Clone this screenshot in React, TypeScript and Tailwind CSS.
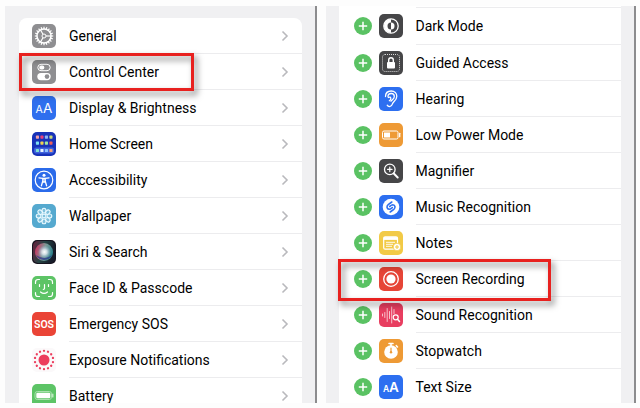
import type { ReactNode } from 'react'

type Item = {
  label: string
  icon: ReactNode
  highlighted?: boolean
}

const Tile = ({ color, children }: { color: string; children?: ReactNode }) => (
  <svg viewBox="0 0 24 24" className="size-6 shrink-0" aria-hidden="true">
    <rect width="24" height="24" rx="5" fill={color} />
    {children}
  </svg>
)

const spokes = (count: number) => Array.from({ length: count }, (_, i) => (i * 360) / count)

const GearIcon = () => (
  <Tile color="#8e8e91">
    <g fill="none" stroke="#fff">
      <circle cx="12" cy="12" r="7" strokeWidth="1.5" />
      <circle cx="12" cy="12" r="2" strokeWidth="1" />
      {spokes(20).map((a) => (
        <path key={a} d="M12 5V2.8" strokeWidth="1.2" transform={`rotate(${a} 12 12)`} />
      ))}
      {[90, 210, 330].map((a) => (
        <path key={a} d="M12 10V5" strokeWidth="1.2" transform={`rotate(${a} 12 12)`} />
      ))}
    </g>
  </Tile>
)

const TogglesIcon = () => (
  <Tile color="#8e8e91">
    <rect x="5.8" y="4.3" width="12.4" height="6.4" rx="3.2" fill="none" stroke="#fff" />
    <rect x="7.3" y="5.5" width="5" height="4" rx="1.8" fill="#fff" />
    <rect x="5.3" y="13" width="13.4" height="7.2" rx="3.6" fill="#fff" />
    <circle cx="15" cy="16.6" r="2.3" fill="#8e8e91" />
  </Tile>
)

const BrightnessIcon = () => (
  <Tile color="#2f6fee">
    <g fill="#fff" fontFamily="Inter, sans-serif">
      <text x="3.6" y="17" fontSize="10.5">A</text>
      <text x="11" y="17" fontSize="13.5">A</text>
    </g>
  </Tile>
)

const TextSizeIcon = () => (
  <Tile color="#2d6ff0">
    <g fill="#fff" fontFamily="Inter, sans-serif" fontWeight="600">
      <text x="4" y="17" fontSize="8.5">A</text>
      <text x="10" y="17" fontSize="13.5">A</text>
    </g>
  </Tile>
)

const appColors = [
  ['#f3a0a8', '#e8407c', '#8fb4f4', '#c7d777'],
  ['#7fe0f0', '#f2d24e', '#9fe7a0', '#f0605a'],
  ['#7fe0d0', '#e8f4ff', '#8fc2ff', '#f5a27a'],
]

const HomeScreenIcon = () => (
  <Tile color="#1832b8">
    <rect x="2" y="15.6" width="20" height="5.8" rx="2" fill="#3f62dc" />
    {appColors.map((row, y) =>
      row.map((c, x) => (
        <rect key={`${x}-${y}`} x={3.9 + x * 4.5} y={[3.6, 9.6, 16.9][y]} width="3.1" height="3.1" rx="0.6" fill={c} />
      )),
    )}
  </Tile>
)

const AccessibilityIcon = () => (
  <Tile color="#2b6bea">
    <circle cx="12" cy="12" r="8.8" fill="none" stroke="#fff" strokeWidth="1.2" />
    <circle cx="12" cy="7.3" r="1.5" fill="#fff" />
    <path
      d="M7 9.8 10.8 10.4V13L9.4 17.8M17 9.8 13.2 10.4V13L14.6 17.8M11 10.5H13V14H11Z"
      fill="none"
      stroke="#fff"
      strokeWidth="1.3"
      strokeLinecap="round"
      strokeLinejoin="round"
    />
  </Tile>
)

const WallpaperIcon = () => (
  <Tile color="#55a9cf">
    <g fill="#a9d8ea" fillOpacity="0.5" stroke="#eafaff" strokeWidth="1.1">
      {spokes(8).map((a) => (
        <ellipse key={a} cx="12" cy="6.6" rx="2" ry="2.4" transform={`rotate(${a} 12 12)`} />
      ))}
      <circle cx="12" cy="12" r="1.9" />
    </g>
  </Tile>
)

const SiriIcon = () => (
  <svg viewBox="0 0 24 24" className="size-6 shrink-0" aria-hidden="true">
    <defs>
      <linearGradient id="siri-base" x1="0" y1="0" x2="1" y2="0.3">
        <stop offset="0" stopColor="#8c2448" />
        <stop offset="0.5" stopColor="#2d5a55" />
        <stop offset="1" stopColor="#16202f" />
      </linearGradient>
      <linearGradient id="siri-orb" x1="0" y1="0.3" x2="1" y2="0.6">
        <stop offset="0" stopColor="#c9305f" />
        <stop offset="0.5" stopColor="#7f9a96" />
        <stop offset="1" stopColor="#27808a" />
      </linearGradient>
      <radialGradient id="siri-glow">
        <stop offset="0" stopColor="#fff" />
        <stop offset="0.4" stopColor="#e6eef5" stopOpacity="0.8" />
        <stop offset="1" stopColor="#9cc4e8" stopOpacity="0" />
      </radialGradient>
    </defs>
    <rect width="24" height="24" rx="5" fill="#17141f" />
    <rect x="1" y="1" width="22" height="22" rx="5" fill="url(#siri-base)" opacity="0.7" />
    <circle cx="12" cy="12" r="9" fill="url(#siri-orb)" />
    <path d="M4 15a9 9 0 0 0 16 0q-7 6-16 0" fill="#2b2f8c" opacity="0.7" />
    <circle cx="12.5" cy="12" r="6.5" fill="url(#siri-glow)" />
  </svg>
)

const FaceIcon = () => (
  <Tile color="#5dc466">
    <g fill="none" stroke="#fff" strokeWidth="1.2" strokeLinecap="round">
      <path d="M3.5 7.5V6A2.5 2.5 0 0 1 6 3.5H7.5M16.5 3.5H18A2.5 2.5 0 0 1 20.5 6V7.5M20.5 16.5V18A2.5 2.5 0 0 1 18 20.5H16.5M7.5 20.5H6A2.5 2.5 0 0 1 3.5 18V16.5" />
      <path d="M7.5 8.5V10.5M16.5 8.5V10.5M12.5 8.5V12.5Q12.5 13.3 11.3 13.3M8.5 16Q12 18.8 15.5 16" />
    </g>
  </Tile>
)

const SosIcon = () => (
  <Tile color="#ea4436">
    <text x="12" y="15.8" fontSize="10.5" fontWeight="600" fill="#fff" textAnchor="middle" fontFamily="Roboto, sans-serif">
      SOS
    </text>
  </Tile>
)

const ExposureIcon = () => (
  <Tile color="#fbf9fa">
    <circle cx="12" cy="12" r="5.5" fill="#ec3d5d" />
    {spokes(14).map((a) => (
      <circle key={a} cx="12" cy="2.8" r="1.15" fill="#ec3d5d" transform={`rotate(${a} 12 12)`} />
    ))}
  </Tile>
)

const BatteryIcon = () => (
  <Tile color="#5dc466">
    <rect x="3" y="7.5" width="16.5" height="8" rx="2.3" fill="none" stroke="#a9e0ad" />
    <rect x="4.3" y="8.7" width="14" height="5.6" rx="1.3" fill="#fff" />
    <path d="M20.8 10V13" stroke="#d6f3d8" strokeWidth="1.2" strokeLinecap="round" />
  </Tile>
)

const DarkModeIcon = () => (
  <Tile color="#464648">
    <circle cx="12" cy="12" r="7.2" fill="none" stroke="#fff" strokeWidth="1.3" />
    <path d="M12 5A7 7 0 0 0 12 19V15.5A3.5 3.5 0 0 1 12 8.5Z" fill="#fff" />
    <path d="M12 8.5A3.5 3.5 0 0 1 12 15.5Z" fill="#fff" />
  </Tile>
)

const GuidedAccessIcon = () => (
  <Tile color="#464648">
    <rect x="3.5" y="3.5" width="17" height="17" rx="2.5" fill="none" stroke="#d8d8d8" strokeDasharray="1 1" />
    <rect x="8" y="11" width="8" height="6.5" rx="1" fill="#fff" />
    <path d="M9.7 11V9A2.3 2.3 0 0 1 14.3 9V11" fill="none" stroke="#fff" strokeWidth="1.4" />
  </Tile>
)

const EarIcon = () => (
  <Tile color="#2d6ff0">
    <g fill="none" stroke="#fff" strokeWidth="1.3" strokeLinecap="round" strokeLinejoin="round">
      <path d="M6.5 9.5C6.5 6 9 4 12.2 4C15.5 4 17.8 6.3 17.8 9.3C17.8 13.8 14 14.2 13.3 17.2C12.7 19.7 9.5 20.4 8.2 18.2" />
      <path d="M9 9.5C9 7.7 10.3 6.5 12.2 6.5C14 6.5 15.3 7.7 15.3 9.4C15.3 11.8 13.3 12.5 12 14.2" />
      <path d="M9.3 10.5Q11.8 9.3 11.8 11.5Q11.8 13 10.3 13.8" />
    </g>
  </Tile>
)

const LowPowerIcon = () => (
  <Tile color="#ee9a35">
    <rect x="3.5" y="8" width="15.5" height="8" rx="1.5" fill="none" stroke="#fff" />
    <rect x="5" y="9.5" width="6" height="5" fill="#fff" />
    <path d="M20.7 10.3V13.7" stroke="#fff" strokeWidth="1.3" strokeLinecap="round" />
  </Tile>
)

const MagnifierIcon = () => (
  <Tile color="#464648">
    <g fill="none" stroke="#fff" strokeLinecap="round">
      <circle cx="10.8" cy="10.4" r="5.3" strokeWidth="1.3" />
      <path d="M14.8 14.5 18.7 18.5" strokeWidth="2" />
      <path d="M8.6 10.4H13M10.8 8.2V12.6" strokeWidth="1.2" />
    </g>
  </Tile>
)

const MusicIcon = () => (
  <Tile color="#2d6ff0">
    <circle cx="12" cy="12" r="8.3" fill="#fff" />
    <g fill="none" stroke="#2d6ff0" strokeWidth="1.6" strokeLinecap="round">
      <path d="M12.8 7 9.2 9.6C7.2 11.2 7.8 14.2 10.2 14.3C11.4 14.3 12.2 13.5 13.3 12.6" />
      <path d="M11.2 17 14.8 14.4C16.8 12.8 16.2 9.8 13.8 9.7C12.6 9.7 11.8 10.5 10.7 11.4" />
    </g>
  </Tile>
)

const NotesIcon = () => (
  <Tile color="#f2ca46">
    <rect x="4.7" y="5.8" width="13.8" height="12.4" rx="1.5" fill="none" stroke="#fff" strokeWidth="1.2" />
    <path d="M4.7 7.5H18.5" stroke="#fff" strokeWidth="2.8" />
    <path d="M7 11.3H16M7 13.3H14M7 15.3H13" stroke="#fff" strokeWidth="0.9" />
    <circle cx="18" cy="16" r="3.8" fill="#fff" stroke="#f2ca46" strokeWidth="0.8" />
    <path d="M16 16H20M18 14V18" stroke="#f2ca46" strokeWidth="1.1" />
  </Tile>
)

const RecordIcon = () => (
  <Tile color="#e64537">
    <circle cx="12" cy="12" r="7.3" fill="none" stroke="#fff" strokeWidth="1.3" />
    <circle cx="12" cy="12" r="4.6" fill="#fff" />
  </Tile>
)

const SoundIcon = () => (
  <Tile color="#e83e60">
    <g fill="none" stroke="#fff" strokeLinecap="round">
      <path d="M3.5 11V13M5.8 9.5V14.5M8.2 5.5V18.5M10.5 8.5V15.5M12.7 4V20M15 6.5V10.5" strokeWidth="0.8" strokeOpacity="0.85" />
      <circle cx="16.7" cy="14.3" r="2.5" strokeWidth="1.2" />
      <path d="M18.5 16.2 20.5 18.5" strokeWidth="1.5" />
    </g>
  </Tile>
)

const StopwatchIcon = () => (
  <Tile color="#ee9a35">
    <circle cx="12" cy="13" r="6.8" fill="#fff" />
    <path d="M10 4.5H14M12 4.5V7M17.3 6.7 18.5 8" stroke="#fff" strokeWidth="1.6" strokeLinecap="round" />
    <path d="M12 9V13" stroke="#ee9a35" strokeWidth="1.2" strokeLinecap="round" />
    <circle cx="12" cy="13.3" r="1.2" fill="#ee9a35" />
  </Tile>
)

const settings: Item[] = [
  { label: 'General', icon: <GearIcon /> },
  { label: 'Control Center', icon: <TogglesIcon />, highlighted: true },
  { label: 'Display & Brightness', icon: <BrightnessIcon /> },
  { label: 'Home Screen', icon: <HomeScreenIcon /> },
  { label: 'Accessibility', icon: <AccessibilityIcon /> },
  { label: 'Wallpaper', icon: <WallpaperIcon /> },
  { label: 'Siri & Search', icon: <SiriIcon /> },
  { label: 'Face ID & Passcode', icon: <FaceIcon /> },
  { label: 'Emergency SOS', icon: <SosIcon /> },
  { label: 'Exposure Notifications', icon: <ExposureIcon /> },
  { label: 'Battery', icon: <BatteryIcon /> },
]

const controls: Item[] = [
  { label: 'Dark Mode', icon: <DarkModeIcon /> },
  { label: 'Guided Access', icon: <GuidedAccessIcon /> },
  { label: 'Hearing', icon: <EarIcon /> },
  { label: 'Low Power Mode', icon: <LowPowerIcon /> },
  { label: 'Magnifier', icon: <MagnifierIcon /> },
  { label: 'Music Recognition', icon: <MusicIcon /> },
  { label: 'Notes', icon: <NotesIcon /> },
  { label: 'Screen Recording', icon: <RecordIcon />, highlighted: true },
  { label: 'Sound Recognition', icon: <SoundIcon /> },
  { label: 'Stopwatch', icon: <StopwatchIcon /> },
  { label: 'Text Size', icon: <TextSizeIcon /> },
]

// Row that opens another settings page
const SettingsRow = ({ label, icon, highlighted }: Item) => (
  <li className="relative">
    <a href="#" className="flex h-9 items-center gap-[13px] pl-[13px]">
      {icon}
      <span className="flex h-full flex-1 items-center justify-between border-b border-[#ececee] pr-[13px]">
        {label}
        <svg viewBox="0 0 8 12" className="h-3 w-2" fill="none" stroke="#b9b9bd" strokeWidth="1.6" aria-hidden="true">
          <path d="M1.5 1.5 6 6 1.5 10.5" />
        </svg>
      </span>
    </a>
    {highlighted && (
      <div className="pointer-events-none absolute -top-px -bottom-px left-0 z-10 w-[175px] border-3 border-[#e8211f] drop-shadow-[3px_4px_3px_rgba(0,0,0,0.5)]" />
    )}
  </li>
)

// Row with a button that adds the control
const ControlRow = ({ label, icon, highlighted }: Item) => (
  <li className="group relative flex h-9 items-center pl-[15px] first:h-[38px]">
    <button type="button" aria-label={`Add ${label}`} className="mr-[7px] shrink-0">
      <svg viewBox="0 0 18 18" className="size-[18px]" aria-hidden="true">
        <circle cx="9" cy="9" r="9" fill="#5ac263" />
        <path d="M4.8 9H13.2M9 4.8V13.2" stroke="#fff" strokeWidth="1.5" />
      </svg>
    </button>
    {icon}
    <span className="ml-[13px] flex h-full flex-1 items-center border-b border-[#ececee] group-first:border-t">{label}</span>
    {highlighted && (
      <div className="pointer-events-none absolute -top-0.5 -bottom-1 -left-px z-10 w-[213px] border-3 border-[#e8211f] drop-shadow-[3px_4px_3px_rgba(0,0,0,0.5)]" />
    )}
  </li>
)

export default function App() {
  return (
    <main className="flex h-screen gap-[9px] bg-[#fdfdfd] pt-1.5 pr-1 pb-[5px] pl-[5px] font-['Roboto',sans-serif] text-sm text-black">
      <section aria-label="Settings" className="min-w-0 flex-1 overflow-hidden border-r-2 border-[#8c8c8e] bg-[#f0f0f2] pt-3 pr-[13px] pl-3.5">
        <ul className="rounded-t-lg bg-white">
          {settings.map((item) => (
            <SettingsRow key={item.label} {...item} />
          ))}
        </ul>
      </section>
      <section aria-label="More controls" className="min-w-0 flex-1 overflow-hidden border-r-2 border-[#8c8c8e] bg-[#f0f0f2] px-[13px]">
        <ul className="bg-white pt-px pb-4">
          {controls.map((item) => (
            <ControlRow key={item.label} {...item} />
          ))}
        </ul>
      </section>
    </main>
  )
}
